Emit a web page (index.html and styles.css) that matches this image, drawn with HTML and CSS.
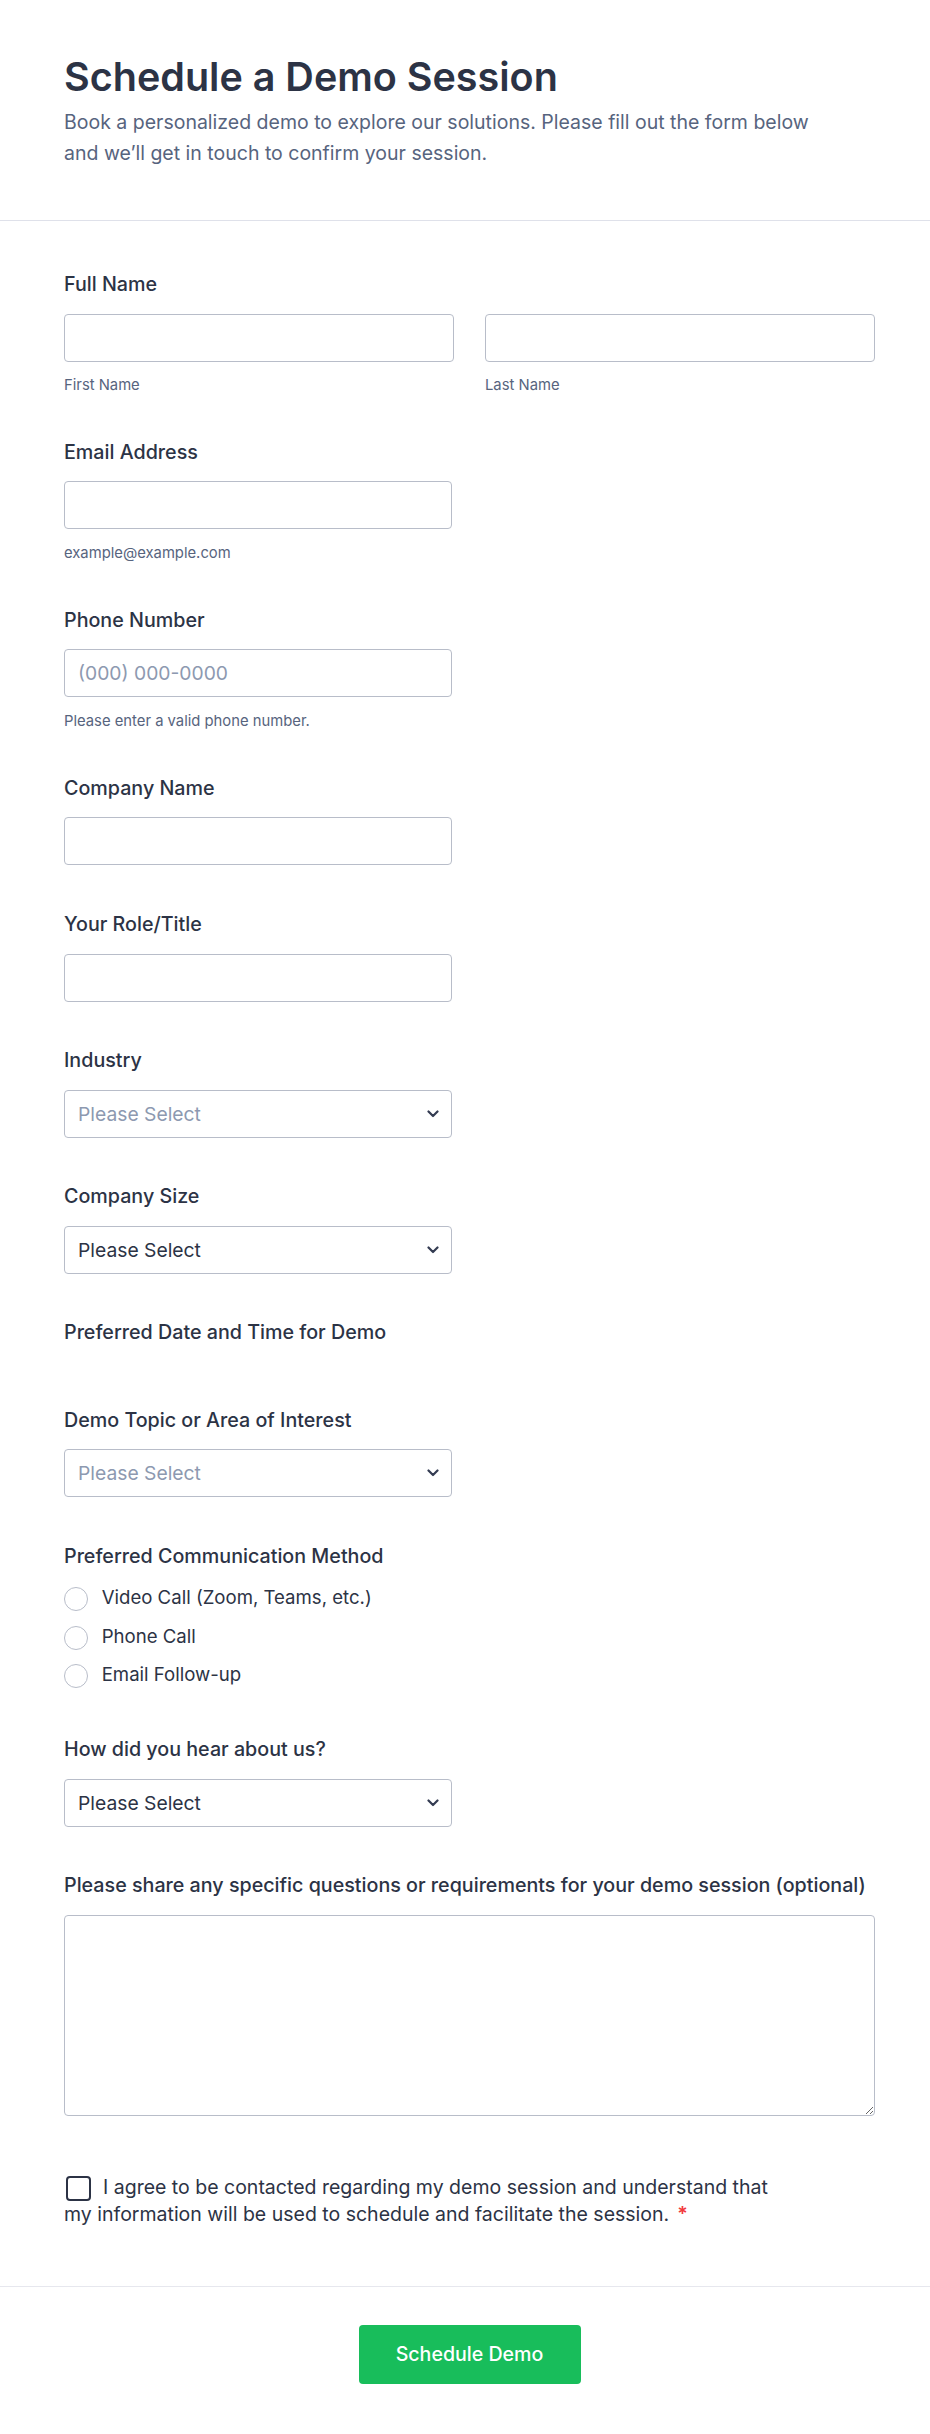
FILE: index.html
```
<!DOCTYPE html>
<html lang="en">
<head>
<meta charset="utf-8">
<title>Schedule a Demo Session</title>
<link rel="stylesheet" href="styles.css">
</head>
<body>
<div class="page">
  <header class="header">
    <h1 class="title">Schedule a Demo Session</h1>
    <p class="desc">Book a personalized demo to explore our solutions. Please fill out the form below and we’ll get in touch to confirm your session.</p>
  </header>

  <form class="form">
    <div class="field field-sub">
      <label class="label">Full Name</label>
      <div class="name-row">
        <div class="name-col">
          <input class="input input-full" type="text">
          <div class="sub">First Name</div>
        </div>
        <div class="name-col">
          <input class="input input-full" type="text">
          <div class="sub">Last Name</div>
        </div>
      </div>
    </div>

    <div class="field field-sub">
      <label class="label">Email Address</label>
      <input class="input" type="email">
      <div class="sub">example@example.com</div>
    </div>

    <div class="field field-sub">
      <label class="label">Phone Number</label>
      <input class="input" type="tel" placeholder="(000) 000-0000">
      <div class="sub">Please enter a valid phone number.</div>
    </div>

    <div class="field">
      <label class="label">Company Name</label>
      <input class="input" type="text">
    </div>

    <div class="field">
      <label class="label">Your Role/Title</label>
      <input class="input" type="text">
    </div>

    <div class="field">
      <label class="label">Industry</label>
      <div class="select-wrap">
        <select class="select is-placeholder"><option>Please Select</option></select>
        <svg class="chevron" width="12" height="8" viewBox="0 0 12 8"><path d="M1.5 1.5L6 6l4.5-4.5" fill="none" stroke="#343c52" stroke-width="2.2" stroke-linecap="round" stroke-linejoin="round"/></svg>
      </div>
    </div>

    <div class="field">
      <label class="label">Company Size</label>
      <div class="select-wrap">
        <select class="select"><option>Please Select</option></select>
        <svg class="chevron" width="12" height="8" viewBox="0 0 12 8"><path d="M1.5 1.5L6 6l4.5-4.5" fill="none" stroke="#343c52" stroke-width="2.2" stroke-linecap="round" stroke-linejoin="round"/></svg>
      </div>
    </div>

    <div class="field field-empty">
      <label class="label">Preferred Date and Time for Demo</label>
    </div>

    <div class="field">
      <label class="label">Demo Topic or Area of Interest</label>
      <div class="select-wrap">
        <select class="select is-placeholder"><option>Please Select</option></select>
        <svg class="chevron" width="12" height="8" viewBox="0 0 12 8"><path d="M1.5 1.5L6 6l4.5-4.5" fill="none" stroke="#343c52" stroke-width="2.2" stroke-linecap="round" stroke-linejoin="round"/></svg>
      </div>
    </div>

    <div class="field">
      <label class="label">Preferred Communication Method</label>
      <div class="radios">
        <label class="radio-row"><input class="radio" type="radio" name="method"><span>Video Call (Zoom, Teams, etc.)</span></label>
        <label class="radio-row"><input class="radio" type="radio" name="method"><span>Phone Call</span></label>
        <label class="radio-row"><input class="radio" type="radio" name="method"><span>Email Follow-up</span></label>
      </div>
    </div>

    <div class="field">
      <label class="label">How did you hear about us?</label>
      <div class="select-wrap">
        <select class="select"><option>Please Select</option></select>
        <svg class="chevron" width="12" height="8" viewBox="0 0 12 8"><path d="M1.5 1.5L6 6l4.5-4.5" fill="none" stroke="#343c52" stroke-width="2.2" stroke-linecap="round" stroke-linejoin="round"/></svg>
      </div>
    </div>

    <div class="field field-textarea">
      <label class="label label-nowrap">Please share any specific questions or requirements for your demo session (optional)</label>
      <textarea class="textarea"></textarea>
    </div>

    <div class="consent">
      <input class="checkbox" type="checkbox">I agree to be contacted regarding my demo session and understand that my information will be used to schedule and facilitate the session.<span class="req">*</span>
    </div>
  </form>

  <footer class="footer">
    <button class="button" type="button">Schedule Demo</button>
  </footer>
</div>
</body>
</html>
```
FILE: styles.css
```
* { box-sizing: border-box; }

html, body {
  margin: 0;
  padding: 0;
  background: #ffffff;
}

body {
  font-family: Inter, "Noto Sans", "Liberation Sans", sans-serif;
  color: #2c3345;
}

.page {
  width: 930px;
}

.header {
  padding: 54px 55px 50.7px 64px;
  border-bottom: 1px solid #dfe1ea;
}

.title {
  margin: 0 0 7.3px;
  font-size: 39.5px;
  line-height: 46px;
  font-weight: 600;
  color: #2c3345;
}

.desc {
  margin: 0;
  max-width: 780px;
  font-size: 19.5px;
  line-height: 31px;
  font-weight: 400;
  color: #57647e;
}

.form {
  padding: 50.85px 55px 58.7px 64px;
}

.field {
  margin-bottom: 46.45px;
}

.field-sub {
  margin-bottom: 45.7px;
}

.field-empty {
  margin-bottom: 63.3px;
}

.field-empty .label {
  margin-bottom: 0;
}

.label {
  display: block;
  margin-bottom: 17.7px;
  font-size: 19.7px;
  line-height: 24px;
  font-weight: 500;
  color: #2c3345;
}

.label-nowrap {
  white-space: nowrap;
}

.name-row {
  display: grid;
  grid-template-columns: 390px 390px;
  column-gap: 31px;
}

.input {
  display: block;
  width: 388px;
  height: 48px;
  margin: 0;
  padding: 0 13px;
  border: 1px solid #b8bdc9;
  border-radius: 4px;
  background: #fff;
  font-family: inherit;
  font-size: 19.3px;
  color: #2c3345;
}

.input-full {
  width: 100%;
}

.input::placeholder {
  color: #8d99b0;
}

.sub {
  margin-top: 14.6px;
  font-size: 14.8px;
  line-height: 18px;
  color: #57647e;
}

.select-wrap {
  position: relative;
  width: 388px;
}

.select {
  display: block;
  width: 100%;
  height: 48px;
  margin: 0;
  padding: 0 40px 0 13px;
  border: 1px solid #b8bdc9;
  border-radius: 4px;
  background: #fff;
  font-family: inherit;
  font-size: 19.3px;
  color: #2c3345;
  -webkit-appearance: none;
  appearance: none;
}

.select.is-placeholder {
  color: #8d99b0;
}

.chevron {
  position: absolute;
  right: 13px;
  top: 20px;
  pointer-events: none;
}

.radios {
  display: flex;
  flex-direction: column;
  gap: 14.3px;
  padding-bottom: 4.65px;
}

.radio-row {
  display: flex;
  align-items: flex-start;
  gap: 13.7px;
  height: 24px;
  font-size: 18.6px;
  line-height: 24px;
  color: #2c3345;
}

.radio {
  -webkit-appearance: none;
  appearance: none;
  flex: none;
  width: 24px;
  height: 24px;
  margin: 2px 0 -2px;
  border: 1px solid #b8bdc9;
  border-radius: 50%;
  background: #fff;
}

.field-textarea {
  margin-bottom: 58.25px;
}

.textarea {
  display: block;
  width: 811px;
  height: 201px;
  margin: 0;
  padding: 10px 13px;
  border: 1px solid #b8bdc9;
  border-radius: 4px;
  font-family: inherit;
  font-size: 18px;
  color: #2c3345;
  resize: vertical;
}

.consent {
  max-width: 730px;
  font-size: 19.5px;
  line-height: 26.7px;
  color: #2c3345;
}

.checkbox {
  -webkit-appearance: none;
  appearance: none;
  display: inline-block;
  vertical-align: top;
  width: 25px;
  height: 25px;
  margin: 1.6px 12px 0 2px;
  border: 2px solid #2c3345;
  border-radius: 4px;
  background: #fff;
}

.req {
  margin-left: 8px;
  color: #f23a3c;
  font-weight: 600;
}

.footer {
  display: flex;
  justify-content: center;
  padding: 37.5px 55px 50px 64px;
  border-top: 1px solid #e6e7ee;
}

.button {
  width: 222px;
  height: 59px;
  border: 0;
  border-radius: 4px;
  background: #18bd5b;
  color: #ffffff;
  font-family: inherit;
  font-size: 19.6px;
  font-weight: 500;
  cursor: pointer;
}
```
